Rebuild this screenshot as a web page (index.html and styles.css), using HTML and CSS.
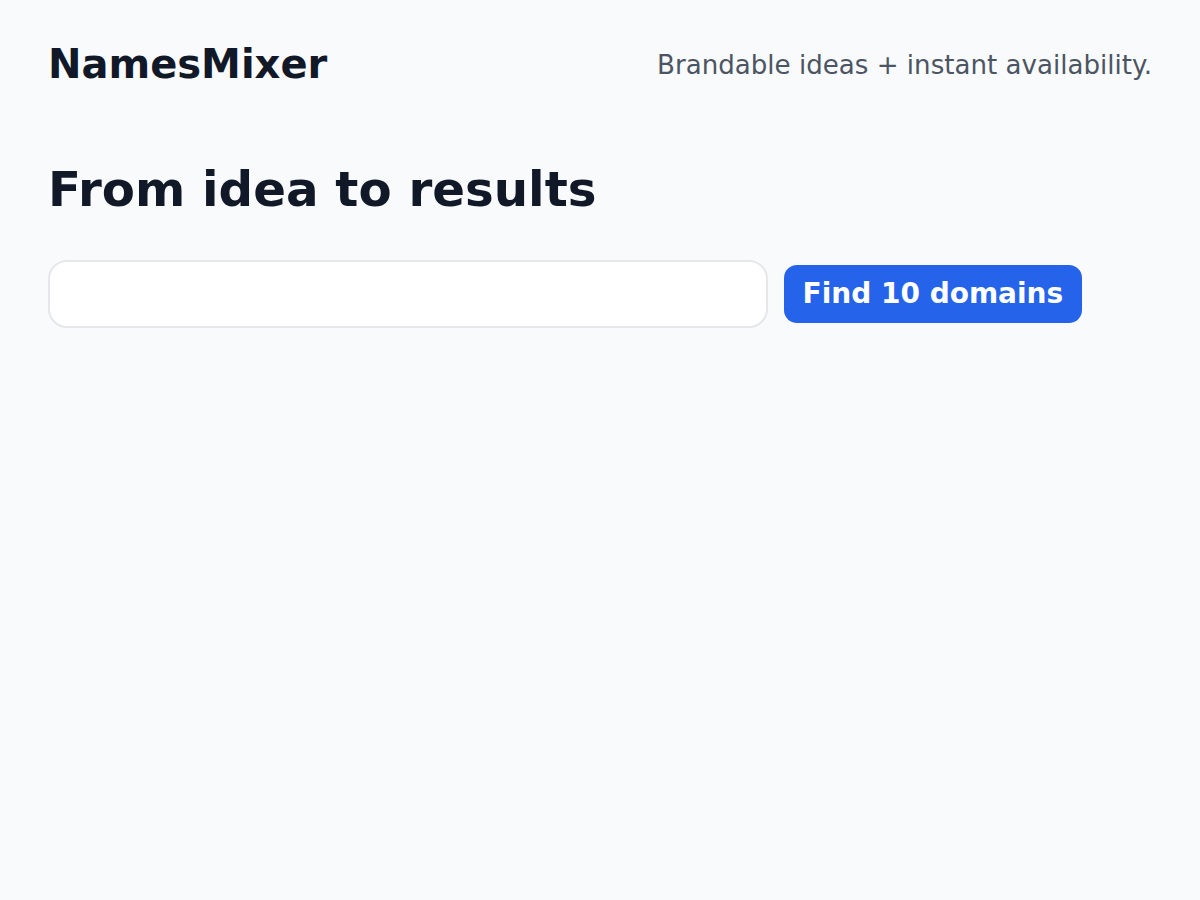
FILE: index.html
```html
<!DOCTYPE html>
<html lang="en">
<head>
<meta charset="utf-8">
<title>NamesMixer</title>
<link rel="stylesheet" href="styles.css">
</head>
<body>
<div class="page">
  <header class="topbar">
    <div class="logo">NamesMixer</div>
    <div class="tagline">Brandable ideas + instant availability.</div>
  </header>
  <main class="hero">
    <h1 class="title">From idea to results</h1>
    <form class="search" onsubmit="return false;">
      <input class="search-input" type="text" aria-label="Describe your idea">
      <button class="search-btn" type="submit">Find 10 domains</button>
    </form>
  </main>
</div>
</body>
</html>
```

FILE: styles.css
```css
* { box-sizing: border-box; }
html, body {
  margin: 0;
  padding: 0;
  background: #f9fafb;
  font-family: "DejaVu Sans", Verdana, sans-serif;
  color: #111827;
}
.page {
  padding: 40px 48px;
  min-height: 900px;
}
.topbar {
  display: flex;
  justify-content: space-between;
  align-items: center;
  height: 48px;
}
.logo {
  font-size: 40px;
  font-weight: 700;
  line-height: 1.2;
  color: #111827;
}
.tagline {
  font-size: 26.1px;
  color: #4b5563;
  line-height: 1.2;
  padding-top: 4px;
}
.hero {
  margin-top: 73px;
}
.title {
  margin: 0 0 41px;
  font-size: 48.3px;
  font-weight: 700;
  line-height: 1.2;
  color: #111827;
}
.search {
  display: flex;
  align-items: center;
  gap: 16px;
  margin: 0;
}
.search-input {
  width: 720px;
  height: 68px;
  border: 2px solid #e5e7eb;
  border-radius: 19px;
  background: #ffffff;
  padding: 0 20px;
  font-family: inherit;
  font-size: 26px;
  outline: none;
}
.search-btn {
  height: 58px;
  padding: 0 18.5px;
  border: none;
  border-radius: 13px;
  background: #2563eb;
  color: #ffffff;
  font-family: inherit;
  font-size: 28px;
  font-weight: 700;
  cursor: pointer;
}
```
